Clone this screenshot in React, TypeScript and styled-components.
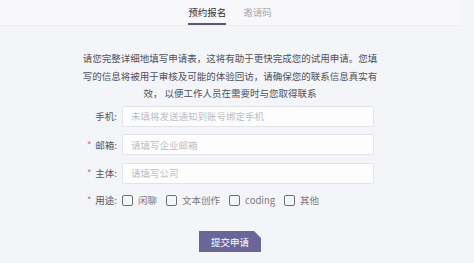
import React, { useState } from 'react';
import styled, { createGlobalStyle } from 'styled-components';

const GlobalStyle = createGlobalStyle`
  html, body {
    margin: 0;
    padding: 0;
    background: #f4f5f8;
  }
  body {
    font-family: "Noto Sans CJK SC", "Noto Sans", sans-serif;
    color: #4a4a50;
  }
`;

const Page = styled.div`
  width: 460px;
  height: 263px;
  overflow: hidden;
  display: flex;
  flex-direction: column;
  align-items: center;
`;

const TabBar = styled.nav`
  align-self: stretch;
  height: 26px;
  box-sizing: border-box;
  display: flex;
  justify-content: center;
  gap: 17px;
  background: #f8f8fa;
  border-bottom: 1px solid #e9e9ee;
`;

const Tab = styled.div<{ $active?: boolean }>`
  font-size: 9.5px;
  line-height: 11px;
  padding-top: 7px;
  height: 25px;
  box-sizing: border-box;
  color: ${(p) => (p.$active ? '#2e2e36' : '#a8a8b0')};
  border-bottom: 2.5px solid ${(p) => (p.$active ? '#5b5977' : 'transparent')};
  cursor: pointer;
`;

const Intro = styled.p`
  margin: 24px 0 3px;
  font-size: 9.5px;
  line-height: 17.5px;
  text-align: center;
  white-space: nowrap;
  color: #505058;
`;

const Form = styled.form`
  width: 288px;
  display: flex;
  flex-direction: column;
  gap: 7.5px;
`;

const Row = styled.div`
  display: flex;
  align-items: center;
`;

const Label = styled.label`
  width: 31px;
  margin-right: 5px;
  font-size: 9.5px;
  color: #55555c;
  text-align: right;
  white-space: nowrap;
`;

const Star = styled.span`
  color: #e06a6a;
  margin-right: 4px;
`;

const Input = styled.input`
  flex: 1;
  height: 21px;
  box-sizing: border-box;
  border: 1px solid #e2e2e8;
  border-radius: 2px;
  background: #fdfdfd;
  padding: 0 8px;
  font-family: inherit;
  font-size: 9.5px;
  color: #333;
  outline: none;
  &::placeholder {
    color: #bdbdc4;
  }
`;

const Options = styled.div`
  display: flex;
  align-items: center;
  gap: 9px;
`;

const Option = styled.label`
  display: flex;
  align-items: center;
  gap: 5px;
  font-size: 9.5px;
  color: #7a7a82;
  cursor: pointer;
`;

const Box = styled.span<{ $checked: boolean }>`
  width: 11px;
  height: 11px;
  box-sizing: border-box;
  border: 1.3px solid #6e6e76;
  border-radius: 2px;
  background: ${(p) => (p.$checked ? '#6a6697' : 'transparent')};
`;

const CheckRow = styled(Row)`
  margin-top: 2px;
  height: 14px;
`;

const Submit = styled.button`
  margin-top: 24px;
  flex-shrink: 0;
  width: 62px;
  height: 21px;
  padding: 0;
  border: none;
  background: #6a6697;
  color: #fff;
  font-family: inherit;
  font-size: 9.5px;
  clip-path: polygon(0 0, calc(100% - 7px) 0, 100% 7px, 100% 100%, 0 100%);
  cursor: pointer;
`;

const uses = ['闲聊', '文本创作', 'coding', '其他'];

export default function App() {
  const [tab, setTab] = useState(0);
  const [checked, setChecked] = useState<string[]>([]);

  const toggle = (u: string) =>
    setChecked((c) => (c.includes(u) ? c.filter((x) => x !== u) : [...c, u]));

  return (
    <>
      <GlobalStyle />
      <Page>
        <TabBar>
          <Tab $active={tab === 0} onClick={() => setTab(0)}>预约报名</Tab>
          <Tab $active={tab === 1} onClick={() => setTab(1)}>邀请码</Tab>
        </TabBar>

        <Intro>
          请您完整详细地填写申请表，这将有助于更快完成您的试用申请。您填
          <br />
          写的信息将被用于审核及可能的体验回访，请确保您的联系信息真实有
          <br />
          效， 以便工作人员在需要时与您取得联系
        </Intro>

        <Form onSubmit={(e) => e.preventDefault()}>
          <Row>
            <Label>手机:</Label>
            <Input placeholder="未填将发送通知到账号绑定手机" />
          </Row>
          <Row>
            <Label><Star>*</Star>邮箱:</Label>
            <Input placeholder="请填写企业邮箱" />
          </Row>
          <Row>
            <Label><Star>*</Star>主体:</Label>
            <Input placeholder="请填写公司" />
          </Row>
          <CheckRow>
            <Label><Star>*</Star>用途:</Label>
            <Options>
              {uses.map((u) => (
                <Option key={u} onClick={() => toggle(u)}>
                  <Box $checked={checked.includes(u)} />
                  {u}
                </Option>
              ))}
            </Options>
          </CheckRow>
        </Form>

        <Submit type="button">提交申请</Submit>
      </Page>
    </>
  );
}
